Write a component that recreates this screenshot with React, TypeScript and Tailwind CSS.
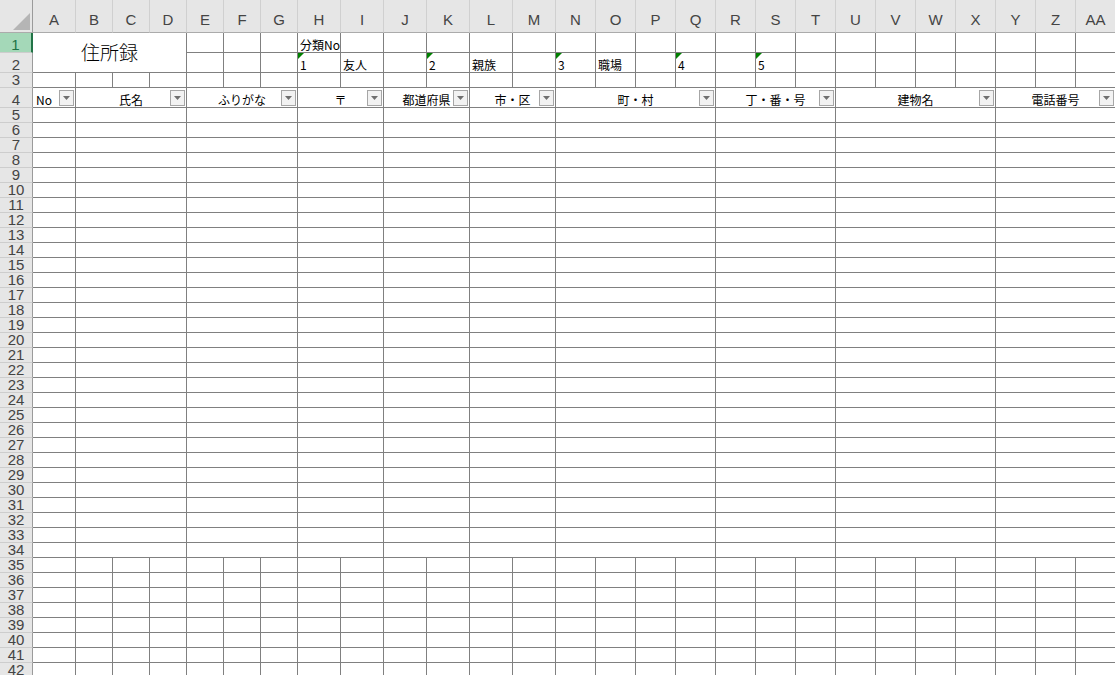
import React from "react"

const COLS = [
  "A", "B", "C", "D", "E", "F", "G", "H", "I", "J", "K", "L", "M", "N",
  "O", "P", "Q", "R", "S", "T", "U", "V", "W", "X", "Y", "Z", "AA",
]

// header row of the address table (row 4), span = number of columns merged
const GROUPS = [
  { label: "No", span: 1, left: true },
  { label: "氏名", span: 3 },
  { label: "ふりがな", span: 3 },
  { label: "〒", span: 2 },
  { label: "都道府県", span: 2 },
  { label: "市・区", span: 2 },
  { label: "町・村", span: 4 },
  { label: "丁・番・号", span: 3 },
  { label: "建物名", span: 4 },
  { label: "電話番号", span: 3 },
]

// row 2 contents, keyed by column letter
const ROW2: Record<string, { text: string; flag?: boolean }> = {
  H: { text: "1", flag: true },
  I: { text: "友人" },
  K: { text: "2", flag: true },
  L: { text: "親族" },
  N: { text: "3", flag: true },
  O: { text: "職場" },
  Q: { text: "4", flag: true },
  S: { text: "5", flag: true },
}

const cellCls = "border-r border-b border-[#808080] bg-white min-w-0 overflow-hidden"

function RowHead({ n, active }: { n: number; active?: boolean }) {
  return (
    <div
      className={
        active
          ? "flex items-end justify-center bg-[#a4d8b8] border-r-2 border-r-[#217346] border-b border-b-[#cdcdcd] text-[#217346] text-[15px] leading-[15px] font-['Liberation_Sans',Arial,sans-serif]"
          : "flex items-end justify-center bg-[#e6e6e6] border-r border-r-[#9b9b9b] border-b border-b-[#cdcdcd] text-[#444] text-[15px] leading-[15px] font-['Liberation_Sans',Arial,sans-serif]"
      }
    >
      {n}
    </div>
  )
}

function FilterButton() {
  return (
    <div className="w-[15px] h-[16px] mr-[1px] mb-[1px] shrink-0 border border-[#a6a6a6] bg-[#f2f2f2] flex items-center justify-center">
      <svg width="7" height="4" viewBox="0 0 7 4">
        <polygon points="0,0 7,0 3.5,4" fill="#6f6f6f" />
      </svg>
    </div>
  )
}

function Cell({ text, flag }: { text?: string; flag?: boolean }) {
  return (
    <div className={"relative " + cellCls}>
      {flag && (
        <svg width="6" height="6" viewBox="0 0 6 6" className="absolute left-0 top-0">
          <polygon points="0,0 6,0 0,6" fill="#008000" />
        </svg>
      )}
      <div className="flex h-full items-end pl-[2px] text-[12px] leading-[14px] whitespace-nowrap">
        {text}
      </div>
    </div>
  )
}

export default function App() {
  const cells: React.ReactNode[] = []

  // column letters
  cells.push(
    <div key="corner" className="flex items-end justify-end p-[2px] bg-[#e6e6e6] border-r border-r-[#9b9b9b] border-b border-b-[#ababab]">
      <svg width="17" height="17" viewBox="0 0 17 17">
        <polygon points="17,0 17,17 0,17" fill="#b5b5b5" />
      </svg>
    </div>
  )
  COLS.forEach((c) =>
    cells.push(
      <div
        key={"h" + c}
        className="flex items-end justify-center pb-[5px] bg-[#e6e6e6] border-r border-r-[#d0d0d0] border-b border-b-[#ababab] text-[15px] leading-[15px] text-[#444] font-['Liberation_Sans',Arial,sans-serif]"
      >
        {c}
      </div>
    )
  )

  // row 1
  cells.push(<RowHead key="r1" n={1} active />)
  cells.push(
    <div key="title" className={"col-span-4 row-span-2 flex items-center justify-center text-[19px] font-light " + cellCls}>
      住所録
    </div>
  )
  COLS.slice(4).forEach((c) =>
    cells.push(<Cell key={"1" + c} text={c === "H" ? "分類No" : undefined} />)
  )

  // row 2
  cells.push(<RowHead key="r2" n={2} />)
  COLS.slice(4).forEach((c) => cells.push(<Cell key={"2" + c} {...ROW2[c]} />))

  // row 3
  cells.push(<RowHead key="r3" n={3} />)
  COLS.forEach((c) => cells.push(<Cell key={"3" + c} />))

  // row 4: table header with filter buttons
  cells.push(<RowHead key="r4" n={4} />)
  GROUPS.forEach((g) =>
    cells.push(
      <div key={"4" + g.label} className={cellCls} style={{ gridColumn: `span ${g.span}` }}>
        <div className="flex h-full items-end">
          {g.left ? (
            <div className="flex-1 pl-[3px] text-[12px] leading-[14px]">{g.label}</div>
          ) : (
            <>
              <div className="w-[16px] shrink-0" />
              <div className="flex-1 text-center whitespace-nowrap text-[12px] leading-[14px]">{g.label}</div>
            </>
          )}
          <FilterButton />
        </div>
      </div>
    )
  )

  // rows 5-34: merged table rows
  for (let r = 5; r <= 34; r++) {
    cells.push(<RowHead key={"r" + r} n={r} />)
    GROUPS.forEach((g) =>
      cells.push(<div key={r + g.label} className={cellCls} style={{ gridColumn: `span ${g.span}` }} />)
    )
  }

  // rows 35-42: plain cells
  for (let r = 35; r <= 42; r++) {
    cells.push(<RowHead key={"r" + r} n={r} />)
    COLS.forEach((c) => cells.push(<div key={r + c} className={cellCls} />))
  }

  return (
    <div className="w-[1115px] h-[675px] overflow-hidden bg-white text-black font-['Noto_Sans_CJK_JP','MS_PGothic',sans-serif]">
      <div className="grid w-[1116px] grid-cols-[33px_43px_repeat(6,37px)_repeat(6,43px)_repeat(14,40px)] grid-rows-[33px_20px_20px_15px_20px_repeat(38,15px)]">
        {cells}
      </div>
    </div>
  )
}
